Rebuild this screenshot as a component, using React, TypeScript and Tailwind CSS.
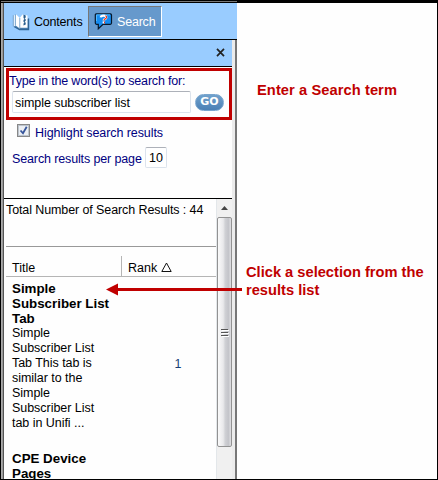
import React from "react";

const BookIcon = () => (
  <svg className="shrink-0" width="18" height="18" viewBox="0 0 18 18">
    <path d="M2 13.5l5.5 3h9V5.5" fill="#4f83b3" stroke="#316595" strokeWidth="1.4" />
    <path d="M1.3 2.2v11.3M3.6 1.5v11" stroke="#6f9cc4" strokeWidth="1" />
    <path d="M1.8 2.2h1.4v11H1.8z" fill="#e4effa" />
    <path d="M4 1.2L7.8 5v10.4L4 12.8z" fill="#fff" />
    <path d="M7.8 5l2.7-3.4 5 1v12.2H7.8z" fill="#fff" />
    <path d="M7.8 5v10.4" stroke="#7ea5c9" strokeWidth=".9" />
    <path d="M11.5 1.6l2.2.8v2l-1 .8 1 1v1.6l-1 .9 1 1v1.8l-2.2.9V10.600l1-.9-1-1V7l1-.9-1-1z" fill="#285d8d" />
  </svg>
);

const HelpIcon = () => (
  <svg className="shrink-0" width="19" height="18" viewBox="0 0 19 18">
    <path d="M2.2 1.8h14.2q1.1 0 1.1 1.1v8.200q0 1.200-1.200 1.200H9L4.300 16.800V12.300H2.500Q1.300 12.300 1.300 11.100V2.900q0-1.100.9-1.100z" fill="#168cf0" stroke="#07182b" strokeWidth="1.2" />
    <path d="M2.5 2.9h13.500M2.500 3v6" stroke="#53baff" fill="none" />
    <path d="M6.800 5.400q.3-1.800 2.700-1.800 2.800 0 2.800 1.800 0 1-1.400 1.700-1.200.5-1.200 1.500" fill="none" stroke="#fff" strokeWidth="2.3" />
    <path d="M11.300 3.700q1.700.7 1.100 2-.4.800-1.600 1.400-.7.500-.7 1.300" fill="none" stroke="#e33820" strokeWidth="1.2" />
    <path d="M8.600 9.400H11v2H8.600z" fill="#fff" />
    <path d="M10 9.400h1v2h-1z" fill="#e33820" />
  </svg>
);

const Scrollbar = () => (
  <div className="flex w-4 shrink-0 flex-col border-l border-[#e3e7ea] bg-[#f0f0f0]">
    <div className="flex h-[18px] items-center justify-center">
      <svg width="7" height="4"><path d="M0 4L3.5 0 7 4z" fill="#444" /></svg>
    </div>
    <div className="flex h-[230px] w-[15px] items-center justify-center rounded-[2px] border border-[#929292] bg-[linear-gradient(90deg,#fafafa_0%,#e9e9eb_40%,#d0d1d5_55%,#c3c4c9_80%,#e0e0e3_100%)]">
      <svg width="8" height="9"><path d="M0 1.5h7M0 4.5h7M0 7.5h7" stroke="#555" /><path d="M1 2.5h7M1 5.5h7M1 8.5h7" stroke="#fff" /></svg>
    </div>
  </div>
);

const Results = () => (
  <div className="min-w-0 flex-1 pl-0.5 text-black">
    <div className="h-[48px] border-b border-[#999] pt-[4px] leading-[15px]">
      <span className="tracking-[-0.1px]">Total Number of Search Results : 44</span>
    </div>
    <div className="mt-[9px] flex h-[21px] border-b border-[#b5b5b5] leading-[25px]">
      <div className="w-[115px] pl-1.5">Title</div>
      <div className="flex flex-1 items-start gap-1 border-l border-[#b5b5b5] pl-1.5">
        <span>Rank</span>
        <svg className="mt-[6px]" width="11" height="10"><path d="M.8 9.5L5.5 1l4.7 8.5z" fill="none" stroke="#111" /></svg>
      </div>
    </div>
    <div className="flex pt-[4px] leading-[15px]">
      <div className="w-[116px] whitespace-nowrap pl-1.5">
        <div className="text-[13.33px] font-bold">Simple<br />Subscriber List<br />Tab</div>
        <div className="tracking-[-0.04px]">Simple<br />Subscriber List<br />Tab This tab is<br />similar to the<br />Simple<br />Subscriber List<br />tab in Unifi ...</div>
      </div>
      <div className="flex flex-1 items-center justify-center text-[#173f74]"><span className="pl-[18px] pt-[16px]">1</span></div>
    </div>
    <div className="mt-5 pl-1.5 text-[13.33px] font-bold leading-[15px]">
      <div>CPE Device</div>
      <div className="h-[14px]">Pages</div>
    </div>
  </div>
);

export default function App() {
  return (
    <div className="relative flex h-[480px] w-[438px] flex-col overflow-hidden border border-black bg-[#fefefe] font-['Liberation_Sans',Arial,sans-serif] text-[12.5px]">
      <div className="flex min-h-0 flex-1">
        <div className="flex w-[236px] shrink-0 flex-col overflow-hidden">
          <div className="h-px shrink-0 bg-[#777]" />
          <div className="flex min-h-0 flex-1 border-t border-black">
            <div className="w-[3px] shrink-0 border-l border-r border-l-[#aaa] border-r-[#555] bg-[#999]" />
            <div className="flex min-w-0 flex-1 flex-col">
              <div className="flex h-[37px] shrink-0 items-center border-b border-black bg-[#99ccff]">
                <div className="flex w-[84px] items-center gap-[4px] pl-[8px] pt-[2px]">
                  <BookIcon /><span className="tracking-[-0.2px]">Contents</span>
                </div>
                <div className="mb-[1px] mt-[1px] flex h-[31px] w-[74px] items-center border border-b-white border-l-[#777] border-r-white border-t-[#777] bg-[#6699cc] pl-[5px] text-white">
                  <HelpIcon /><span className="ml-[4px] mt-[2px] tracking-[-0.2px]">Search</span>
                </div>
              </div>
              <div className="flex min-h-0 flex-1">
                <div className="flex w-[228px] shrink-0 flex-col">
                  <div className="flex h-[27px] shrink-0 items-center justify-end border-b border-black bg-[#99ccff] pr-[7px]">
                    <svg className="-mt-px" width="9" height="9" viewBox="0 0 9 9"><path d="M1 .8l7 7.4M8 .8L1 8.2" stroke="#222" strokeWidth="1.7" /></svg>
                  </div>
                  <div className="ml-0.5 mt-px h-[52px] shrink-0 border-[3px] border-[#c00000] text-[#000080]">
                    <div className="mt-[2px] h-[18px] whitespace-nowrap leading-[17px] tracking-[-0.19px]">Type in the word(s) to search for:</div>
                    <div className="flex items-center gap-[4px] pl-[3px]">
                      <div className="flex h-[22px] w-[179px] items-center rounded-[2px] border border-[#dce3ec] border-t-[#adb1b9] bg-white pl-[2px] pt-[2px] tracking-[-0.05px] text-black">simple subscriber list</div>
                      <div className="flex h-[17px] w-[29px] items-center justify-center rounded-full border border-[#78a5ce] bg-[linear-gradient(#70a1cc,#4b80b5)] font-['DejaVu_Sans'] text-[11px] font-bold text-white">GO</div>
                    </div>
                  </div>
                  <div className="flex h-[23px] shrink-0 items-center gap-[5px] pl-[13px] pt-[1px] text-[#000080]">
                    <div className="mb-[4px] flex h-[13px] w-[13px] items-center justify-center border border-[#888] bg-[#eceff3] outline-1 -outline-offset-2 outline-[#bcc4cd]">
                      <svg width="9" height="9"><path d="M1.5 4.5L4 7.3 7.7.8" fill="none" stroke="#36559b" strokeWidth="1.8" /></svg>
                    </div>
                    <span className="pt-[2px] tracking-[-0.08px]">Highlight search results</span>
                  </div>
                  <div className="mt-[3px] flex h-[23px] shrink-0 items-center pl-2 text-[#000080]">
                    <span className="w-[133px] whitespace-nowrap pt-[4px] tracking-[-0.13px]">Search results per page</span>
                    <div className="flex h-[21px] w-[22px] items-center rounded-[2px] border border-[#dce3ec] border-t-[#adb1b9] bg-white pl-[3px] pt-[2px] text-black">10</div>
                  </div>
                  <div className="mt-[29px] flex min-h-0 flex-1 overflow-hidden border-t border-black">
                    <Results />
                    <Scrollbar />
                  </div>
                </div>
                <div className="w-[3px] bg-[#ececec]" />
                <div className="flex-1 bg-[#777]" />
              </div>
            </div>
          </div>
        </div>
        <div className="flex-1 border-t-2 border-black text-[14.67px] font-bold text-[#c00000]">
          <div className="whitespace-nowrap pl-[20px] pt-[79px] leading-[16px] tracking-[0.08px]">Enter a Search term</div>
          <div className="whitespace-nowrap pl-[9px] pt-[165px] leading-[18px]">Click a selection from the<br />results list</div>
        </div>
      </div>
      <svg className="absolute left-[105px] top-[282px]" width="138" height="13" viewBox="0 0 138 13">
        <path d="M11 6.5h125" stroke="#c00000" strokeWidth="3" />
        <path d="M0 6.5L12 .5v12z" fill="#c00000" />
      </svg>
    </div>
  );
}
